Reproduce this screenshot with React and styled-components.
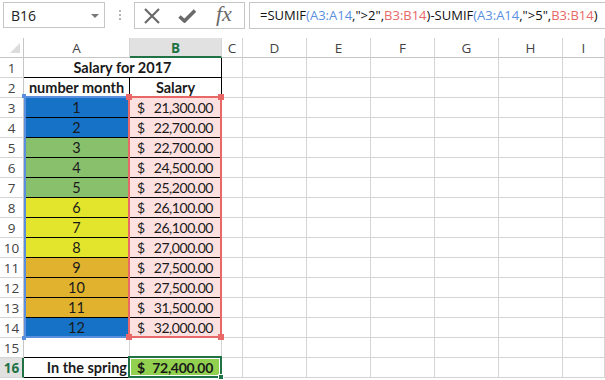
import React from "react";
import styled, { createGlobalStyle } from "styled-components";

const GlobalStyle = createGlobalStyle`
  html, body {
    margin: 0;
    background: #ffffff;
    overflow: hidden;
  }
  body {
    font-family: "Open Sans", "Liberation Sans", sans-serif;
  }
`;

const UI_FONT = `"Open Sans", "Liberation Sans", sans-serif`;
const CELL_FONT = `"Lato", "Liberation Sans", sans-serif`;
const GRID = "#d4d4d4";
const HEAD_LINE = "#c6c6c6";
const EXCEL_GREEN = "#217346";
const BLUE_REF = "#5a8fdf";
const RED_REF = "#e86868";
const TEMPLATE = "24px 106px 92px 21px repeat(5, 64px) 1fr";

const Page = styled.div`
  width: 605px;
  height: 380px;
  overflow: hidden;
  background: #fff;
`;

/* ---------- formula bar ---------- */

const FormulaBar = styled.div`
  height: 38px;
  display: flex;
  align-items: flex-start;
  padding: 2px 0 0 3px;
  box-sizing: border-box;
`;

const NameBox = styled.div`
  width: 102px;
  height: 26px;
  box-sizing: border-box;
  border: 1px solid #c6c6c6;
  display: flex;
  align-items: center;
  justify-content: space-between;
  padding: 0 5px 0 7px;
  font-family: ${UI_FONT};
  font-size: 14px;
  color: #222;
`;

const DropArrow = styled.span`
  width: 0;
  height: 0;
  border-left: 4px solid transparent;
  border-right: 4px solid transparent;
  border-top: 4px solid #777;
  margin-top: 1px;
`;

const Splitter = styled.div`
  width: 29px;
  height: 26px;
  display: flex;
  flex-direction: column;
  align-items: center;
  justify-content: center;
  gap: 2px;
`;

const Dot = styled.span`
  width: 2px;
  height: 2px;
  background: #b4b4b4;
`;

const FxBox = styled.div`
  width: 111px;
  height: 27px;
  box-sizing: border-box;
  border: 1px solid #c6c6c6;
  display: flex;
  align-items: center;
  padding-left: 9px;
  gap: 18px;
`;

const FxText = styled.span`
  font-family: "Liberation Serif", "DejaVu Serif", serif;
  font-style: italic;
  font-size: 22px;
  color: #6a6a6a;
  line-height: 1;
  margin-top: -3px;
  margin-left: 2px;
`;

const FormulaInput = styled.div`
  flex: 1;
  height: 27px;
  margin-left: 4px;
  box-sizing: border-box;
  border: 1px solid #c6c6c6;
  border-right: none;
  display: flex;
  align-items: center;
  padding-left: 10px;
  padding-bottom: 1px;
  white-space: pre;
  overflow: hidden;
  font-family: ${UI_FONT};
  font-size: 13px;
  color: #111;
`;

const Ref = styled.span`
  color: ${(p) => p.$color};
`;

/* ---------- sheet ---------- */

const SheetWrap = styled.div`
  position: relative;
`;

const Sheet = styled.div`
  display: grid;
  grid-template-columns: ${TEMPLATE};
  grid-template-rows: repeat(17, 20px);
`;

const Overlay = styled(Sheet)`
  position: absolute;
  inset: 0;
  pointer-events: none;
`;

const Corner = styled.div`
  border-right: 1px solid ${HEAD_LINE};
  border-bottom: 1px solid ${HEAD_LINE};
  box-sizing: border-box;
  position: relative;
`;

const CornerTri = styled.span`
  position: absolute;
  right: 3px;
  bottom: 4px;
  width: 0;
  height: 0;
  border-left: 10px solid transparent;
  border-bottom: 10px solid #dcdcdc;
`;

const ColHead = styled.div`
  box-sizing: border-box;
  border-right: 1px solid ${GRID};
  border-bottom: ${(p) => (p.$active ? `2px solid ${EXCEL_GREEN}` : `1px solid ${HEAD_LINE}`)};
  background: ${(p) => (p.$active ? "#e1e1e1" : "#fff")};
  color: ${(p) => (p.$active ? EXCEL_GREEN : "#444")};
  font-weight: ${(p) => (p.$active ? 700 : 400)};
  font-family: ${UI_FONT};
  font-size: 13.5px;
  display: flex;
  align-items: center;
  justify-content: center;
  padding-top: 1px;
`;

const RowHead = styled.div`
  box-sizing: border-box;
  border-right: ${(p) => (p.$active ? `2px solid ${EXCEL_GREEN}` : `1px solid ${HEAD_LINE}`)};
  border-bottom: 1px solid ${GRID};
  background: ${(p) => (p.$active ? "#e1e1e1" : "#fff")};
  color: ${(p) => (p.$active ? EXCEL_GREEN : "#444")};
  font-weight: ${(p) => (p.$active ? 700 : 400)};
  font-family: ${UI_FONT};
  font-size: 13.5px;
  display: flex;
  align-items: center;
  justify-content: center;
  padding-left: ${(p) => (p.$active ? "1px" : "0")};
`;

const Cell = styled.div`
  box-sizing: border-box;
  grid-column: ${(p) => (p.$span ? `span ${p.$span}` : "auto")};
  border-right: 1px solid ${(p) => p.$br || GRID};
  border-bottom: 1px solid ${(p) => p.$bb || GRID};
  background: ${(p) => p.$fill || "transparent"};
  font-family: ${CELL_FONT};
  font-size: 14.5px;
  font-weight: ${(p) => (p.$bold ? 700 : 400)};
  color: #1a1a1a;
  display: flex;
  align-items: flex-end;
  justify-content: ${(p) => p.$align || "flex-start"};
  padding: 0 ${(p) => (p.$align === "flex-end" ? "2px" : "0")} 0 0;
  line-height: 18px;
  white-space: nowrap;
  overflow: hidden;
`;

const Money = styled(Cell)`
  justify-content: space-between;
  padding: 0 8px 0 7px;
  font-size: 14px;
  letter-spacing: ${(p) => (p.$bold ? "-0.3px" : "-0.45px")};
`;

const Range = styled.div`
  grid-column: ${(p) => p.$col};
  grid-row: ${(p) => p.$rows};
  border: 2px solid ${(p) => p.$color};
  margin: ${(p) => p.$margin};
  position: relative;
  z-index: ${(p) => p.$z || 2};
  box-shadow: ${(p) => (p.$active ? "inset 0 0 0 1px #fff" : "none")};
`;

const Handle = styled.span`
  position: absolute;
  width: ${(p) => p.$size || 6}px;
  height: ${(p) => p.$size || 6}px;
  box-sizing: border-box;
  background: ${(p) => p.$color};
  ${(p) => (p.$top ? "top: -4px;" : "bottom: -4px;")}
  ${(p) => (p.$left ? "left: -4px;" : "right: -4px;")}
  border: ${(p) => (p.$ring ? "1px solid #fff" : "none")};
`;

const COLS = ["A", "B", "C", "D", "E", "F", "G", "H", "I"];

const BLUE = "#1672c6";
const GREEN = "#89c06c";
const YELLOW = "#e3e42c";
const ORANGE = "#e1b22d";
const PINK = "#fde0e0";

const data = [
  [1, BLUE, "21,300.00"],
  [2, BLUE, "22,700.00"],
  [3, GREEN, "22,700.00"],
  [4, GREEN, "24,500.00"],
  [5, GREEN, "25,200.00"],
  [6, YELLOW, "26,100.00"],
  [7, YELLOW, "26,100.00"],
  [8, YELLOW, "27,000.00"],
  [9, ORANGE, "27,500.00"],
  [10, ORANGE, "27,500.00"],
  [11, ORANGE, "31,500.00"],
  [12, BLUE, "32,000.00"],
];

const Blanks = () => COLS.slice(2).map((c) => <Cell key={c} />);

const CrossIcon = () => (
  <svg width="16" height="16" viewBox="0 0 16 16">
    <path d="M1 1 L15 15 M15 1 L1 15" stroke="#6a6a6a" strokeWidth="2.2" fill="none" />
  </svg>
);

const CheckIcon = () => (
  <svg width="18" height="14" viewBox="0 0 18 14">
    <path d="M1.5 7.5 L6.5 12 L17 1.5" stroke="#6a6a6a" strokeWidth="3.6" fill="none" strokeLinejoin="miter" />
  </svg>
);

export default function App() {
  return (
    <Page>
      <GlobalStyle />
      <FormulaBar>
        <NameBox>
          B16
          <DropArrow />
        </NameBox>
        <Splitter>
          <Dot />
          <Dot />
          <Dot />
        </Splitter>
        <FxBox>
          <CrossIcon />
          <CheckIcon />
          <FxText>fx</FxText>
        </FxBox>
        <FormulaInput>
          =SUMIF<Ref $color={BLUE_REF}>(</Ref>
          <Ref $color={BLUE_REF}>A3:A14</Ref>,"&gt;2",<Ref $color={RED_REF}>B3:B14</Ref>)-SUMIF<Ref $color={BLUE_REF}>(</Ref>
          <Ref $color={BLUE_REF}>A3:A14</Ref>,"&gt;5",<Ref $color={RED_REF}>B3:B14</Ref>)
        </FormulaInput>
      </FormulaBar>

      <SheetWrap>
        <Sheet>
          <Corner>
            <CornerTri />
          </Corner>
          {COLS.map((c) => (
            <ColHead key={c} $active={c === "B"}>
              {c}
            </ColHead>
          ))}

          <RowHead>1</RowHead>
          <Cell $span={2} $bold $align="center" $br="#000" $bb="#000">
            Salary for 2017
          </Cell>
          <Blanks />

          <RowHead>2</RowHead>
          <Cell $bold $align="center" $br="#000" $bb="#000">
            number month
          </Cell>
          <Cell $bold $align="center" $br="#000" $bb="#000">
            Salary
          </Cell>
          <Blanks />

          {data.map(([n, fill, amount], i) => (
            <React.Fragment key={n}>
              <RowHead>{i + 3}</RowHead>
              <Cell $fill={fill} $align="center" $br="#000" $bb="#000">
                {n}
              </Cell>
              <Money $fill={PINK} $br="#000" $bb="#000">
                <span>$</span>
                <span>{amount}</span>
              </Money>
              <Blanks />
            </React.Fragment>
          ))}

          <RowHead>15</RowHead>
          <Cell $bb="#000" />
          <Cell $bb="#000" />
          <Blanks />

          <RowHead $active>16</RowHead>
          <Cell $bold $align="flex-end" $bb="#000">
            In the spring
          </Cell>
          <Money $bold $fill="#92d050" $bb="#000">
            <span>$</span>
            <span>72,400.00</span>
          </Money>
          <Blanks />
        </Sheet>

        <Overlay>
          <Range $col="2" $rows="4 / 16" $color={BLUE_REF} $margin="-2px 0 0 0">
            <Handle $color={BLUE_REF} $top $left $size={4} />
            <Handle $color={BLUE_REF} $left $size={4} />
          </Range>
          <Range $col="3" $rows="4 / 16" $color={RED_REF} $margin="-2px 0 0 -2px" $z={3}>
            <Handle $color={RED_REF} $top $left />
            <Handle $color={RED_REF} $top />
            <Handle $color={RED_REF} $left />
            <Handle $color={RED_REF} />
          </Range>
          <Range $col="3" $rows="17 / 18" $color={EXCEL_GREEN} $margin="-2px 0 0 -2px" $z={4} $active>
            <Handle $color={EXCEL_GREEN} $ring />
          </Range>
        </Overlay>
      </SheetWrap>
    </Page>
  );
}
